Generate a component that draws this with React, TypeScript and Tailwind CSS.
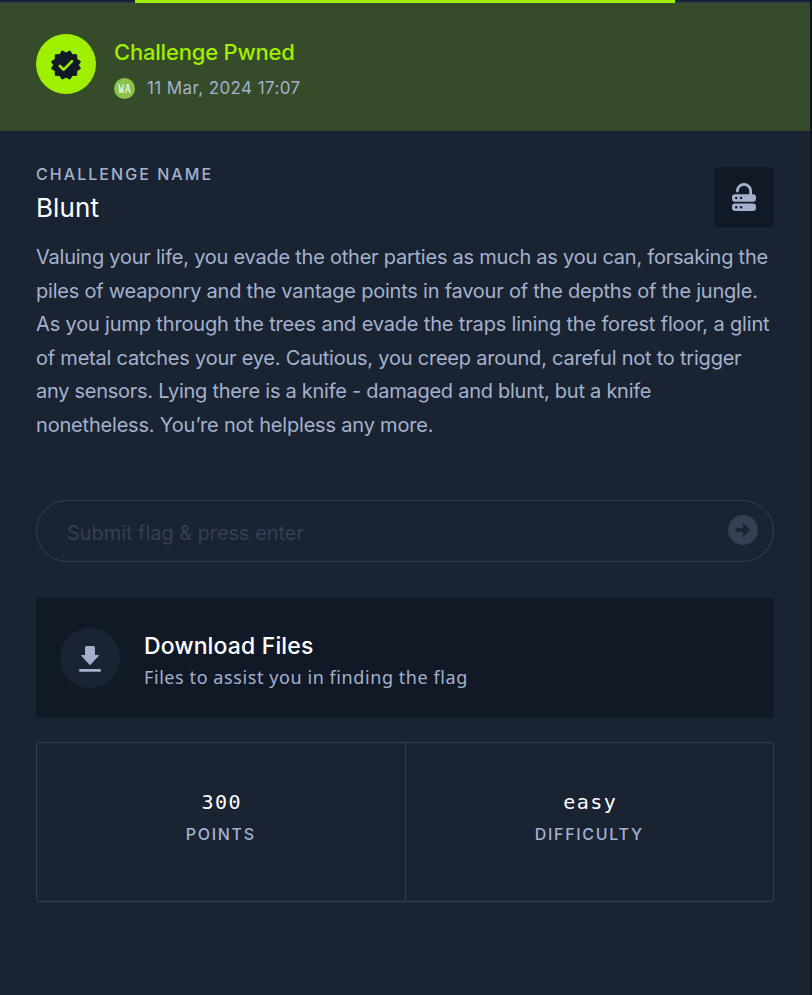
const story = [
  { text: "Valuing your life, you evade the other parties as much as you can, forsaking the", tracking: "tracking-[-0.235px]" },
  { text: "piles of weaponry and the vantage points in favour of the depths of the jungle.", tracking: "tracking-[-0.225px]" },
  { text: "As you jump through the trees and evade the traps lining the forest floor, a glint", tracking: "tracking-[-0.165px]" },
  { text: "of metal catches your eye. Cautious, you creep around, careful not to trigger", tracking: "tracking-[-0.225px]" },
  { text: "any sensors. Lying there is a knife - damaged and blunt, but a knife", tracking: "tracking-[-0.265px]" },
  { text: "nonetheless. You’re not helpless any more.", tracking: "tracking-[-0.19px]" },
];

function Label({ text, tracking }: { text: string; tracking: string }) {
  return <div className={`text-[16px] leading-5 font-medium text-[#a4b1cd] whitespace-nowrap ${tracking}`}>{text}</div>;
}

function Stat({ value, label }: { value: string; label: string }) {
  return (
    <div className="flex h-full flex-1 flex-col items-center pt-[45px]">
      <div className="pl-[2px] font-['DejaVu_Sans_Mono',monospace] text-[20px] leading-7 tracking-[1.5px] text-white">{value}</div>
      <div className="mt-2"><Label text={label} tracking="tracking-[1.7px]" /></div>
    </div>
  );
}

function VerifiedIcon() {
  return (
    <svg width="30" height="30" viewBox="0 0 30 30">
      <path fill="#111927" stroke="#111927" strokeWidth="1" strokeLinejoin="round" d="M15 3.1 18.9 .8l2.3 3.9 4.5.1.1 4.5L29.5 11.5 27.4 15l2.1 3.6-3.7 2.2-.1 4.5-4.5.1-2.3 3.8-3.9-2.1-3.9 2.1-2.3-3.8-4.5-.1-.1-4.5-3.7-2.2L2.600 15 .5 11.5 4.200 9.300l.1-4.5 4.500-.1L11.100 .8Z" />
      <path fill="none" stroke="#9fef00" strokeWidth="2.600" strokeLinecap="round" strokeLinejoin="round" d="m8.800 16 3.900 3.700 8.300-8.500" />
    </svg>
  );
}

function ServerLockIcon() {
  return (
    <svg width="26" height="30" viewBox="0 0 26 30">
      <path fill="none" stroke="#a4b1cd" strokeWidth="2.800" strokeLinecap="round" d="M6.400 9V8.900a6.600 6.600 0 0 1 13.200 0V13" />
      <rect x="1" y="12.200" width="24" height="7.600" rx="3" fill="#a4b1cd" />
      <rect x="1" y="21.400" width="24" height="7.600" rx="3" fill="#a4b1cd" />
      <g fill="#111927">
        <circle cx="5.200" cy="16" r="1.200" /><circle cx="10" cy="16" r="1.200" />
        <circle cx="5.200" cy="25.200" r="1.200" /><circle cx="10" cy="25.200" r="1.200" />
      </g>
    </svg>
  );
}

export default function App() {
  return (
    <div className="flex h-[995px] w-[812px] bg-[#111821] font-['Inter',sans-serif]">
      <main className="flex w-[810px] flex-col bg-[#1a2332]">
        <div className="flex h-[3px] justify-center border-b border-[#2b3a55] bg-[#1a2332]"><div className="h-[3px] w-[540px] shrink-0 bg-[#9fef00]" /></div>
        <header className="flex h-32 items-start bg-[#354b29] px-9 pt-[31px]">
          <div className="flex size-[60px] items-center justify-center rounded-full bg-[#9fef00] pt-px"><VerifiedIcon /></div>
          <div className="ml-[18px] pt-1">
            <h2 className="text-[22px] leading-7 font-medium tracking-[-0.2px] text-[#9fef00] whitespace-nowrap">Challenge Pwned</h2>
            <div className="mt-[12px] flex h-[21px] items-center">
              <div className="flex size-[21px] items-center justify-center rounded-full bg-[#8bc34a] pl-px font-['Noto_Sans_Mono_CJK_SC','Liberation_Mono',monospace] text-[11px] leading-none tracking-[1px] text-white">WA</div>
              <time className="ml-3 pb-[2px] text-[17px] leading-5 tracking-[0.4px] text-[#a4b1cd] whitespace-nowrap">11 Mar, 2024 17:07</time>
            </div>
          </div>
        </header>
        <section className="px-9 pt-9">
          <div className="flex h-[74px] items-start justify-between">
            <div className="-mt-[3px]">
              <Label text="CHALLENGE NAME" tracking="tracking-[2.05px]" />
              <h1 className="mt-[6px] text-[26px] leading-9 tracking-[0.1px] text-white">Blunt</h1>
            </div>
            <div className="flex size-[60px] items-center justify-center rounded-[3px] bg-[#111927]"><ServerLockIcon /></div>
          </div>
          <p className="text-[20px] leading-[33.600px] text-[#a4b1cd]">
            {story.map((line) => (<span key={line.text} className={`block whitespace-nowrap ${line.tracking}`}>{line.text}</span>))}
          </p>
          <form className="mt-[57px] flex h-[62px] items-center justify-between rounded-full border border-[#343f54] pr-[15px] pl-[30px]">
            <span className="pt-[5px] text-[20px] tracking-[-0.05px] text-[#343f54]">Submit flag &amp; press enter</span>
            <svg className="mb-[2px]" width="30" height="30" viewBox="0 0 30 30"><circle cx="15" cy="15" r="15" fill="#373f54" /><path fill="#1a2332" d="M9.200 13.200H15V8l7.500 7-7.500 7v-5.200H9.200a1.800 1.800 0 0 1 0-3.600Z" /></svg>
          </form>
          <div className="mt-9 flex h-[120px] items-center rounded-[3px] bg-[#111927] px-6">
            <div className="flex size-[60px] items-center justify-center rounded-full bg-[#1a2332]">
              <svg width="24" height="28" viewBox="0 0 24 28"><path fill="#a4b1cd" stroke="#a4b1cd" strokeLinejoin="round" d="M7.500 3.300q0-.8.800-.8h7.400q.8 0 .8.800v8.200h4L12 20.800 3.500 11.500h4Z" /><rect x="1" y="25" width="22" height="2.800" rx="1.200" fill="#a4b1cd" /></svg>
            </div>
            <div className="ml-6 pt-[7px]">
              <div className="text-[23px] leading-8 font-medium tracking-[0.15px] text-white whitespace-nowrap">Download Files</div>
              <div className="-mt-px font-['Noto_Sans',sans-serif] text-[18px] leading-8 tracking-[0.58px] text-[#a4b1cd] whitespace-nowrap">Files to assist you in finding the flag</div>
            </div>
          </div>
          <div className="mt-6 flex h-40 rounded-[3px] border border-[#343f4f]">
            <Stat value="300" label="POINTS" />
            <div className="w-px bg-[#343f4f]" />
            <Stat value="easy" label="DIFFICULTY" />
          </div>
        </section>
      </main>
    </div>
  );
}
